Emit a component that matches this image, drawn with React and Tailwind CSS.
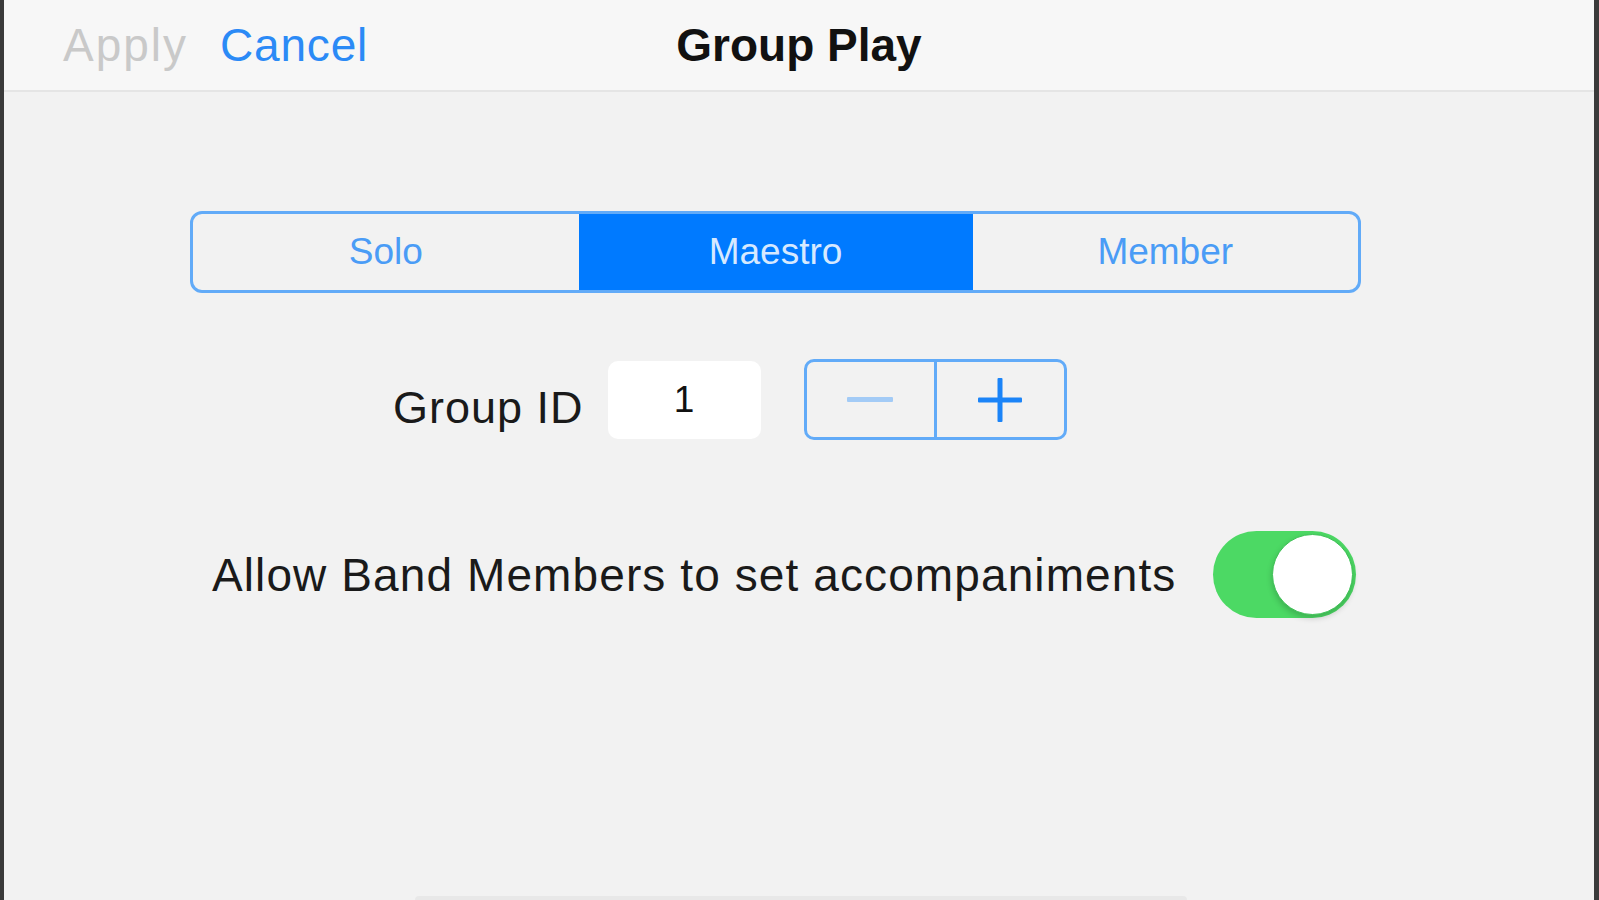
import React from "react";

const font = { fontFamily: '"Liberation Sans", Arial, sans-serif' };

export default function App() {
  return (
    <div
      className="w-full h-[900px] bg-[#f2f2f2] border-l-[4px] border-r-[5px] border-l-[#3a3a3a] border-r-[#3a3a3a] flex flex-col overflow-hidden"
      style={font}
    >
      {/* Header */}
      <div className="h-[92px] shrink-0 bg-[#f7f7f7] border-b-2 border-[#e5e5e5] grid grid-cols-[1fr_auto_1fr] items-center">
        <div className="flex items-center pl-[59px] gap-[32px]">
          <span className="text-[46px] tracking-[2px] text-[#c9c9c9] leading-none">Apply</span>
          <span className="text-[46px] tracking-[0.8px] text-[#2b8af6] leading-none">Cancel</span>
        </div>
        <div className="text-[46px] font-bold text-[#111] leading-none">Group Play</div>
        <div />
      </div>

      {/* Body */}
      <div className="flex-1 flex flex-col">
        {/* Segmented control */}
        <div className="mt-[119px] ml-[186px] w-[1171px] h-[82px] border-[3px] border-[#62abf8] rounded-[12px] overflow-hidden flex">
          <div className="flex-1 flex items-center justify-center text-[37px] text-[#4a9cf6]">Solo</div>
          <div className="w-[394px] bg-[#007aff] flex items-center justify-center text-[37px] text-[#d6e9ff]">Maestro</div>
          <div className="flex-1 flex items-center justify-center text-[37px] text-[#4a9cf6]">Member</div>
        </div>

        {/* Group ID row */}
        <div className="mt-[66px] ml-[389px] h-[81px] flex items-center">
          <span className="mt-4 text-[45px] tracking-[1px] text-[#1a1a1a] leading-none">Group ID</span>
          <div className="ml-[24px] w-[153px] h-[78px] bg-white rounded-[10px] flex items-center justify-center text-[37px] text-[#111]">
            1
          </div>
          <div className="ml-[43px] w-[263px] h-[81px] border-[3px] border-[#62abf8] rounded-[10px] flex">
            <div className="flex-1 flex items-center justify-center">
              <svg width="46" height="6" viewBox="0 0 46 6">
                <rect x="0" y="0" width="46" height="5" rx="1" fill="#a3cbf6" />
              </svg>
            </div>
            <div className="w-[3px] bg-[#62abf8]" />
            <div className="flex-1 flex items-center justify-center">
              <svg width="44" height="44" viewBox="0 0 44 44">
                <rect x="0" y="19.5" width="44" height="5" rx="1" fill="#1b84f8" />
                <rect x="19.5" y="0" width="5" height="44" rx="1" fill="#1b84f8" />
              </svg>
            </div>
          </div>
        </div>

        {/* Toggle row */}
        <div className="mt-[91px] ml-[208px] h-[87px] flex items-center">
          <span className="text-[46px] tracking-[1.1px] text-[#1a1a1a] leading-none">
            Allow Band Members to set accompaniments
          </span>
          <div className="ml-[37px] w-[143px] h-[87px] rounded-full bg-[#4cd964] flex items-center justify-end pr-[3px]">
            <div className="w-[81px] h-[81px] rounded-full bg-white border border-[#3fc257] shadow-[0_3px_6px_rgba(0,0,0,0.2)]" />
          </div>
        </div>

        <div className="flex-1" />
        <div className="ml-[411px] w-[772px] h-[4px] bg-[#e8e8e8] rounded-t-md" />
      </div>
    </div>
  );
}
